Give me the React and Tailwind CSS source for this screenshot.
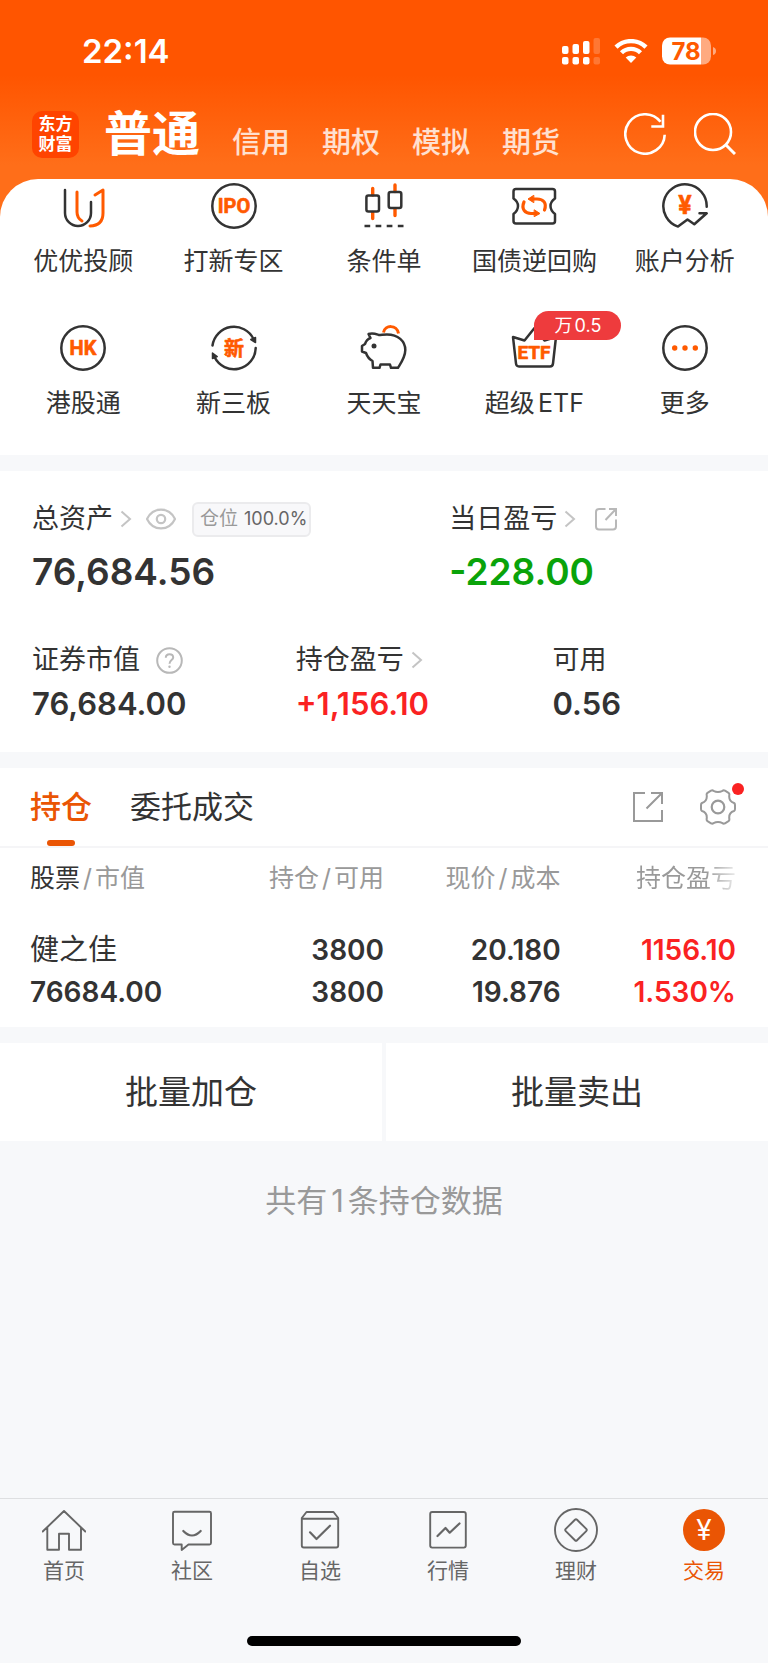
import { useState } from 'react'

const DARK = '#333333'
const ORANGE = '#ff5a00'

// 48x48 icons, drawn around 0,0
function MenuIcon({ children }) {
  return (
    <svg
      className="block size-12"
      viewBox="-24 -24 48 48"
      fill="none"
      stroke={DARK}
      strokeWidth="2.500"
      strokeLinecap="round"
      strokeLinejoin="round"
      aria-hidden="true"
    >
      {children}
    </svg>
  )
}

function IconText({ children, y, size }) {
  return (
    <text
      className="font-['Roboto','Noto_Sans_CJK_SC',sans-serif] font-bold"
      x="0"
      y={y}
      fontSize={size}
      textAnchor="middle"
      fill={ORANGE}
      stroke={ORANGE}
      strokeWidth="0.600"
    >
      {children}
    </text>
  )
}

const menu = [
  {
    label: '优优投顾',
    icon: (
      <>
        <path d="M-18 -16V7A13 13 0 0 0 8 7V-4" />
        <path d="M-6 -14V6q0 6 5 9M12 -11L20 -16V7q0 12.500 -13 13" stroke={ORANGE} strokeWidth="3" />
      </>
    ),
  },
  {
    label: '打新专区',
    icon: (
      <>
        <circle r="21.700" />
        <IconText y="7" size="20">IPO</IconText>
      </>
    ),
  },
  {
    label: '条件单',
    icon: (
      <>
        <path d="M-11.300 -17.500V-11M-11.300 6.500V12.500M11 -21V-14.500M11 3V9.500" stroke={ORANGE} strokeWidth="3.400" />
        <rect x="-17.600" y="-10.500" width="12.600" height="16" rx="2" />
        <rect x="4.700" y="-14" width="12.600" height="16" rx="2" />
        <path d="M-19.500 20H20" strokeDasharray="5.700 5.400" strokeLinecap="butt" strokeWidth="2.600" />
      </>
    ),
  },
  {
    label: '国债逆回购',
    icon: (
      <>
        <path d="M-18 -17H18.500q2.500 0 2.500 2.500V-7.500Q16.500 -4.500 16.500 0T21 8V15q0 2.500 -2.500 2.500H-18q-2.500 0 -2.500 -2.500V8Q-16 4.500 -16 0T-20.500 -7.500V-14.500q0 -2.500 2.500 -2.500z" />
        <path d="M-10 -4C-13 3 -9 7.500 -3 7.500H1M10.500 4C13 -3 9.500 -7 3 -7H-1" stroke={ORANGE} strokeWidth="3.200" />
        <path d="M0.500 4L6 7.500L0.500 10.500zM-0.500 -10.500L-6 -7L-0.500 -3.500z" fill={ORANGE} stroke={ORANGE} strokeWidth="1" />
      </>
    ),
  },
  {
    label: '账户分析',
    icon: (
      <>
        <path d="M21.700 0.700A21.700 21.700 0 1 0 -7 20.600L2.500 13.500L9.300 18.200L21.700 7.300H14.500" />
        <IconText y="7.500" size="25">¥</IconText>
      </>
    ),
  },
  {
    label: '港股通',
    icon: (
      <>
        <circle r="21.700" />
        <IconText y="7" size="20">HK</IconText>
      </>
    ),
  },
  {
    label: '新三板',
    icon: (
      <>
        <path d="M-21.500 -2.500A21.700 21.700 0 0 1 19.500 -9M21.700 0A21.700 21.700 0 0 1 -19.500 9" />
        <path d="M16.800 -8.500L21.500 -10.500V-5.500zM-16.800 8.500L-21.500 10.500V5z" fill={DARK} strokeWidth="1.500" />
        <IconText y="7.500" size="20">新</IconText>
      </>
    ),
  },
  {
    label: '天天宝',
    icon: (
      <>
        <path d="M-15.500 -14C-11 -15.500 -8 -14 -5 -13C-3 -13 0 -13.500 3 -13.500C14 -13.500 21.300 -7 21.300 2C21.300 9 17 15 14 19.800H7L6 16.500H-3.500L-4.500 19.800H-11L-11.500 13C-15 11 -17 8 -18 5L-22 3.500V-2L-19 -4C-18 -7 -16.500 -9 -13.500 -10Z" />
        <circle cx="-10" cy="-2" r="2.500" fill={DARK} stroke="none" />
        <path d="M-0.500 -15.500C1 -23.500 13 -23.500 14.500 -14.500" stroke={ORANGE} strokeWidth="3" strokeLinecap="butt" />
      </>
    ),
  },
  {
    label: '超级ETF',
    tag: '万0.5',
    icon: (
      <>
        <path d="M-21 -11L-9.500 -7.500L0.500 -20L10.500 -7.500L22 -11L19 15.500q-0.300 3 -3 3H-15q-2.700 0 -3 -3z" />
        <IconText y="11" size="19">ETF</IconText>
      </>
    ),
  },
  {
    label: '更多',
    icon: (
      <>
        <circle r="21.700" />
        <g fill={ORANGE} stroke="none">
          <circle cx="-10.300" r="2.700" />
          <circle r="2.700" />
          <circle cx="10.300" r="2.700" />
        </g>
      </>
    ),
  },
]

const accounts = ['信用', '期权', '模拟', '期货']

const tabBar = [
  {
    label: '首页',
    icon: <path d="M-21.300 1.500L0 -19L21.300 1.500M-16.700 -2.500V19.700H-5V3.700H5V19.700H17V-2.500" />,
  },
  {
    label: '社区',
    icon: (
      <>
        <path d="M-17.500 -18.300H17.500q1.500 0 1.500 1.500V13q0 1.500 -1.500 1.500H-3.500L-10.300 20V14.500H-17.500q-1.500 0 -1.500 -1.500V-16.800q0 -1.500 1.500 -1.500z" />
        <path d="M-8.700 1Q0 10 8.700 1" strokeWidth="2.200" />
      </>
    ),
  },
  {
    label: '自选',
    icon: (
      <>
        <path d="M-18.200 -12L-13.500 -18H13.500L18.200 -12V15.500q0 2 -2 2H-16.200q-2 0 -2 -2zM-18 -11.300H18" />
        <path d="M-10 2.300L-3.500 9L10 -4.300" strokeWidth="2.200" />
      </>
    ),
  },
  {
    label: '行情',
    icon: (
      <>
        <rect x="-17.800" y="-18" width="35.600" height="35.600" rx="2" />
        <path d="M-10.500 6L-2.500 -2L1.700 2.700L11.500 -6.500" strokeWidth="2.200" />
      </>
    ),
  },
  {
    label: '理财',
    icon: (
      <>
        <circle r="21" />
        <rect x="-8" y="-8" width="16" height="16" rx="1.500" transform="rotate(45)" />
      </>
    ),
  },
  {
    label: '交易',
    icon: (
      <>
        <circle r="21" fill="#ea5504" stroke="none" />
        <text className="font-['Inter',sans-serif]" y="10" fontSize="28" textAnchor="middle" fill="#ffffff" stroke="none">
          ¥
        </text>
      </>
    ),
  },
]

function Chevron() {
  return (
    <svg className="block h-[18px] w-3" viewBox="0 0 12 18" fill="none" stroke="#c4c4c4" strokeWidth="2" aria-hidden="true">
      <path d="M1.500 1.500L10 9L1.500 16.500" />
    </svg>
  )
}

function StatusBar() {
  return (
    <div className="flex h-[102px] items-center justify-between pr-[52px] pl-[82px] text-white">
      <time className="text-[33px] leading-10 font-semibold">22:14</time>
      <div className="flex items-center gap-[14px]">
        <svg className="block h-7 w-[38px]" viewBox="0 0 38 28" fill="currentColor" aria-hidden="true">
          <rect x="0" y="9" width="6.500" height="8" rx="2" />
          <rect x="10.500" y="7" width="6.500" height="10" rx="2" />
          <rect x="21" y="4" width="6.500" height="13" rx="2" />
          <rect x="31.500" y="1" width="6.500" height="16" rx="2" opacity="0.2" />
          <rect x="0" y="20" width="6.500" height="7.500" rx="2" />
          <rect x="10.500" y="20" width="6.500" height="7.500" rx="2" />
          <rect x="21" y="20" width="6.500" height="7.500" rx="2" />
          <rect x="31.500" y="20" width="6.500" height="7.500" rx="2" opacity="0.2" />
        </svg>
        <svg className="block h-6 w-[34px]" viewBox="0 0 34 24" aria-hidden="true">
          <g fill="none" stroke="currentColor" strokeWidth="4.400">
            <path d="M2 8.200A21.500 21.500 0 0 1 32 8.200" />
            <path d="M7.500 13.800A13.500 13.500 0 0 1 26.500 13.800" />
          </g>
          <path d="M17 24L11.700 18.500A7.700 7.700 0 0 1 22.300 18.500z" fill="currentColor" />
        </svg>
        <svg className="block h-7 w-[54px]" viewBox="0 0 54 28" aria-hidden="true">
          <clipPath id="battery">
            <rect width="49" height="27" y="0.500" rx="8" />
          </clipPath>
          <g clipPath="url(#battery)" fill="#ffffff">
            <rect width="39" height="28" />
            <rect x="39" width="10" height="28" opacity="0.500" />
          </g>
          <path d="M51 10q3 1 3 4t-3 4z" fill="#ffffff" opacity="0.500" />
          <text className="font-['Inter',sans-serif] font-bold" x="24" y="23" fontSize="24" textAnchor="middle" fill="#ff5a00">
            78
          </text>
        </svg>
      </div>
    </div>
  )
}

function Header() {
  return (
    <header>
      <StatusBar />
      <div className="flex h-[77px] items-center pr-8 pb-[13px] pl-8 text-white">
        <div className="flex size-[47px] flex-col items-center justify-center rounded-[10px] bg-[#ff4400] text-[17px] leading-5 font-bold">
          <span>东方</span>
          <span>财富</span>
        </div>
        <nav className="ml-[25px] flex items-end gap-8">
          <a href="#putong" className="text-5xl leading-[60px] font-bold">普通</a>
          {accounts.map((name) => (
            <a key={name} href="#account" className="text-[29px] leading-[42px] font-medium text-white/80">
              {name}
            </a>
          ))}
        </nav>
        <div className="ml-auto flex gap-7">
          <button type="button" aria-label="刷新">
            <svg className="block size-[42px]" viewBox="-21 -21 42 42" fill="none" stroke="currentColor" strokeWidth="2.600">
              <path d="M19.700 0.700A19.700 19.700 0 1 1 15.500 -12.200M18 -19.300V-7.500H6.300" />
            </svg>
          </button>
          <button type="button" aria-label="搜索">
            <svg className="block size-[42px]" viewBox="-21 -21 42 42" fill="none" stroke="currentColor" strokeWidth="2.600">
              <circle cx="-2" cy="-2" r="18" />
              <path d="M10.500 10.500L20 20" strokeWidth="3" />
            </svg>
          </button>
        </div>
      </div>
    </header>
  )
}

function Menu() {
  return (
    <section className="grid grid-cols-5 gap-y-12 rounded-t-[38px] bg-white px-2 pt-[3px] pb-[37px]">
      {menu.map(({ label, icon, tag }) => (
        <a key={label} href="#menu" className="flex flex-col items-center">
          <div className="relative">
            <MenuIcon>{icon}</MenuIcon>
            {tag && (
              <span className="absolute -top-[13px] left-6 flex h-[29px] w-[87px] items-center justify-center rounded-full rounded-bl-none bg-[#ee3b3d] text-lg text-white">
                {tag}
              </span>
            )}
          </div>
          <span className="mt-4 text-[25px] leading-[30px] whitespace-nowrap">{label}</span>
        </a>
      ))}
    </section>
  )
}

function Assets() {
  return (
    <section className="bg-white px-8 pt-[30px] pb-7">
      <div className="grid grid-cols-[416fr_286fr]">
        <div>
          <div className="flex h-9 items-center">
            <span className="text-[27px]">总资产</span>
            <span className="ml-[7px]"><Chevron /></span>
            <button type="button" aria-label="隐藏金额" className="ml-[14px]">
              <svg className="block h-[22px] w-[30px]" viewBox="0 0 30 22" fill="none" stroke="#c4c4c4" strokeWidth="2.200">
                <path d="M1 11C7 -1.500 23 -1.500 29 11C23 23.500 7 23.500 1 11z" />
                <circle cx="15" cy="11" r="4.200" />
              </svg>
            </button>
            <span className="ml-4 flex h-[35px] items-center gap-[6px] rounded-md border-2 border-[#ebebed] bg-[#f8f8fa] pr-[2px] pl-[6px] text-lg text-[#666666]">
              <span className="text-[19px] text-[#999999]">仓位</span>
              100.0%
            </span>
          </div>
          <div className="mt-[13px] text-[37px] leading-[44px] font-semibold">76,684.56</div>
        </div>
        <div>
          <div className="flex h-9 items-center">
            <span className="text-[27px]">当日盈亏</span>
            <span className="ml-[7px]"><Chevron /></span>
            <button type="button" aria-label="分享盈亏" className="ml-[18px]">
              <svg className="block size-6" viewBox="0 0 24 24" fill="none" stroke="#b8b8b8" strokeWidth="2">
                <path d="M11.500 2H5Q2 2 2 5V19.500Q2 22.500 5 22.500H19Q22 22.500 22 19.500V12.500M11.500 13L21.500 2.500M15 2H22V9" />
              </svg>
            </button>
          </div>
          <div className="mt-[13px] text-[37px] leading-[44px] font-semibold text-[#0aa30a]">-228.00</div>
        </div>
      </div>
      <div className="mt-12 grid grid-cols-[263fr_256fr_183fr]">
        <div>
          <div className="flex h-9 items-center">
            <span className="text-[27px]">证券市值</span>
            <button type="button" aria-label="说明" className="ml-4">
              <svg className="block size-[27px]" viewBox="0 0 27 27" fill="none" stroke="#b8b8b8" strokeWidth="2">
                <circle cx="13.500" cy="13.500" r="12.300" />
                <path d="M9.800 10.800Q9.800 7.200 13.500 7.200T17.200 10.500C17.200 13.200 13.500 13 13.500 16.700" />
                <circle cx="13.500" cy="19.700" r="1.200" fill="#b8b8b8" stroke="none" />
              </svg>
            </button>
          </div>
          <div className="mt-[6px] text-[31px] leading-10 font-semibold">76,684.00</div>
        </div>
        <div>
          <div className="flex h-9 items-center">
            <span className="text-[27px]">持仓盈亏</span>
            <span className="ml-[7px]"><Chevron /></span>
          </div>
          <div className="mt-[6px] text-[31px] leading-10 font-semibold text-[#fa2222]">+1,156.10</div>
        </div>
        <div>
          <div className="flex h-9 items-center">
            <span className="text-[27px]">可用</span>
          </div>
          <div className="mt-[6px] text-[31px] leading-10 font-semibold">0.56</div>
        </div>
      </div>
    </section>
  )
}

function Slash() {
  return <span className="px-[3px]">/</span>
}

function Holdings() {
  const [tab, setTab] = useState('持仓')

  return (
    <section className="bg-white">
      <div className="flex h-20 items-center border-b-2 border-[#f5f5f7] pr-8 pl-[30px]">
        <div className="flex gap-[38px] self-stretch">
          {['持仓', '委托成交'].map((name) => (
            <button
              key={name}
              type="button"
              onClick={() => setTab(name)}
              className={`relative text-[31px] ${tab === name ? 'font-medium text-[#ea5504]' : ''}`}
            >
              {name}
              {tab === name && (
                <span className="absolute bottom-0 left-1/2 h-[6px] w-7 -translate-x-1/2 rounded-full bg-[#ea5504]" />
              )}
            </button>
          ))}
        </div>
        <button type="button" aria-label="分享持仓" className="ml-auto">
          <svg className="block size-[30px]" viewBox="0 0 30 30" fill="none" stroke="#999999" strokeWidth="2">
            <path d="M12 1H1V29H29V18M13.500 16.500L28.500 1.500M18 1H29V12" />
          </svg>
        </button>
        <button type="button" aria-label="设置" className="relative ml-[37px]">
          <svg className="block size-9" viewBox="-18 -18 36 36" fill="none" stroke="#999999" strokeWidth="2" strokeLinejoin="round">
            <path d="M-10.500 -14.200L-7 -16.300Q-5.500 -17 -4.500 -16.200Q0 -13.800 4.500 -16.200Q5.500 -17 7 -16.300L10.500 -14.200Q11.600 -13.500 11.300 -12C10.800 -8 12.500 -5 16 -4Q17 -3.500 17 -2V2Q17 3.500 16 4C12.500 5 10.800 8 11.300 12Q11.600 13.500 10.500 14.200L7 16.300Q5.500 17 4.500 16.200Q0 13.800 -4.500 16.200Q-5.500 17 -7 16.300L-10.500 14.200Q-11.600 13.500 -11.300 12C-10.800 8 -12.500 5 -16 4Q-17 3.500 -17 2V-2Q-17 -3.500 -16 -4C-12.500 -5 -10.800 -8 -11.300 -12Q-11.600 -13.500 -10.500 -14.200z" />
            <circle r="6.300" strokeWidth="2.200" />
          </svg>
          <span className="absolute -top-[6px] -right-2 size-3 rounded-full bg-[#fa2222]" />
        </button>
      </div>

      <table className="w-full table-fixed">
        <colgroup>
          <col className="w-[50%]" />
          <col className="w-[23%]" />
          <col className="w-[27%]" />
        </colgroup>
        <thead>
          <tr className="h-[62px] text-[25px] text-[#999999]">
            <th className="p-0 pl-[30px] font-normal">
              <div className="flex justify-between">
                <span><span className="text-[#333333]">股票</span><Slash />市值</span>
                <span>持仓<Slash />可用</span>
              </div>
            </th>
            <th className="p-0 text-right font-normal">现价<Slash />成本</th>
            <th className="p-0 pr-8 text-right font-normal">
              <span className="bg-linear-to-r from-[#999999] from-70% to-[#999999]/20 bg-clip-text text-transparent">
                持仓盈亏
              </span>
            </th>
          </tr>
        </thead>
        <tbody>
          <tr className="text-[28px] leading-[42px] font-semibold">
            <td className="p-0 pt-[19px] pb-[14px] pl-[30px]">
              <div className="flex justify-between">
                <div>
                  <div className="text-[29px] font-normal">健之佳</div>
                  <div>76684.00</div>
                </div>
                <div className="text-right">
                  <div>3800</div>
                  <div>3800</div>
                </div>
              </div>
            </td>
            <td className="p-0 pt-[19px] pb-[14px] text-right">
              <div>20.180</div>
              <div>19.876</div>
            </td>
            <td className="p-0 pt-[19px] pr-8 pb-[14px] text-right text-[#fa2222]">
              <div>1156.10</div>
              <div>1.530%</div>
            </td>
          </tr>
        </tbody>
      </table>
    </section>
  )
}

function TabBar() {
  return (
    <footer className="mt-auto border-t border-[#dedfe1] pt-[9px] pb-[17px]">
      <nav className="grid grid-cols-6 text-[#666666]">
        {tabBar.map(({ label, icon }) => (
          <a
            key={label}
            href="#tab"
            className={`flex flex-col items-center ${label === '交易' ? 'text-[#ea5504]' : ''}`}
          >
            <svg
              className="block size-11"
              viewBox="-22 -22 44 44"
              fill="none"
              stroke="currentColor"
              strokeWidth="1.900"
              strokeLinecap="round"
              strokeLinejoin="round"
              aria-hidden="true"
            >
              {icon}
            </svg>
            <span className="mt-[5px] text-[21px] leading-7">{label}</span>
          </a>
        ))}
      </nav>
      <div className="mx-auto mt-[51px] h-[10px] w-[274px] rounded-full bg-black" />
    </footer>
  )
}

export default function App() {
  return (
    <div className="flex min-h-screen flex-col bg-[#f7f8fa] font-['Inter','Noto_Sans_CJK_SC',sans-serif] text-[#333333] [text-autospace:normal]">
      <div className="bg-[linear-gradient(to_bottom,#ff5500_75px,#ff6e19_165px)]">
        <Header />
        <Menu />
      </div>
      <main className="mt-4 flex flex-col gap-4">
        <Assets />
        <Holdings />
        <div className="grid grid-cols-2 gap-1 text-[33px]">
          <button type="button" className="h-[98px] bg-white pt-[2px]">批量加仓</button>
          <button type="button" className="h-[98px] bg-white pt-[2px]">批量卖出</button>
        </div>
        <p className="mt-6 text-center text-[31px] leading-10 text-[#999999]">共有1条持仓数据</p>
      </main>
      <TabBar />
    </div>
  )
}
